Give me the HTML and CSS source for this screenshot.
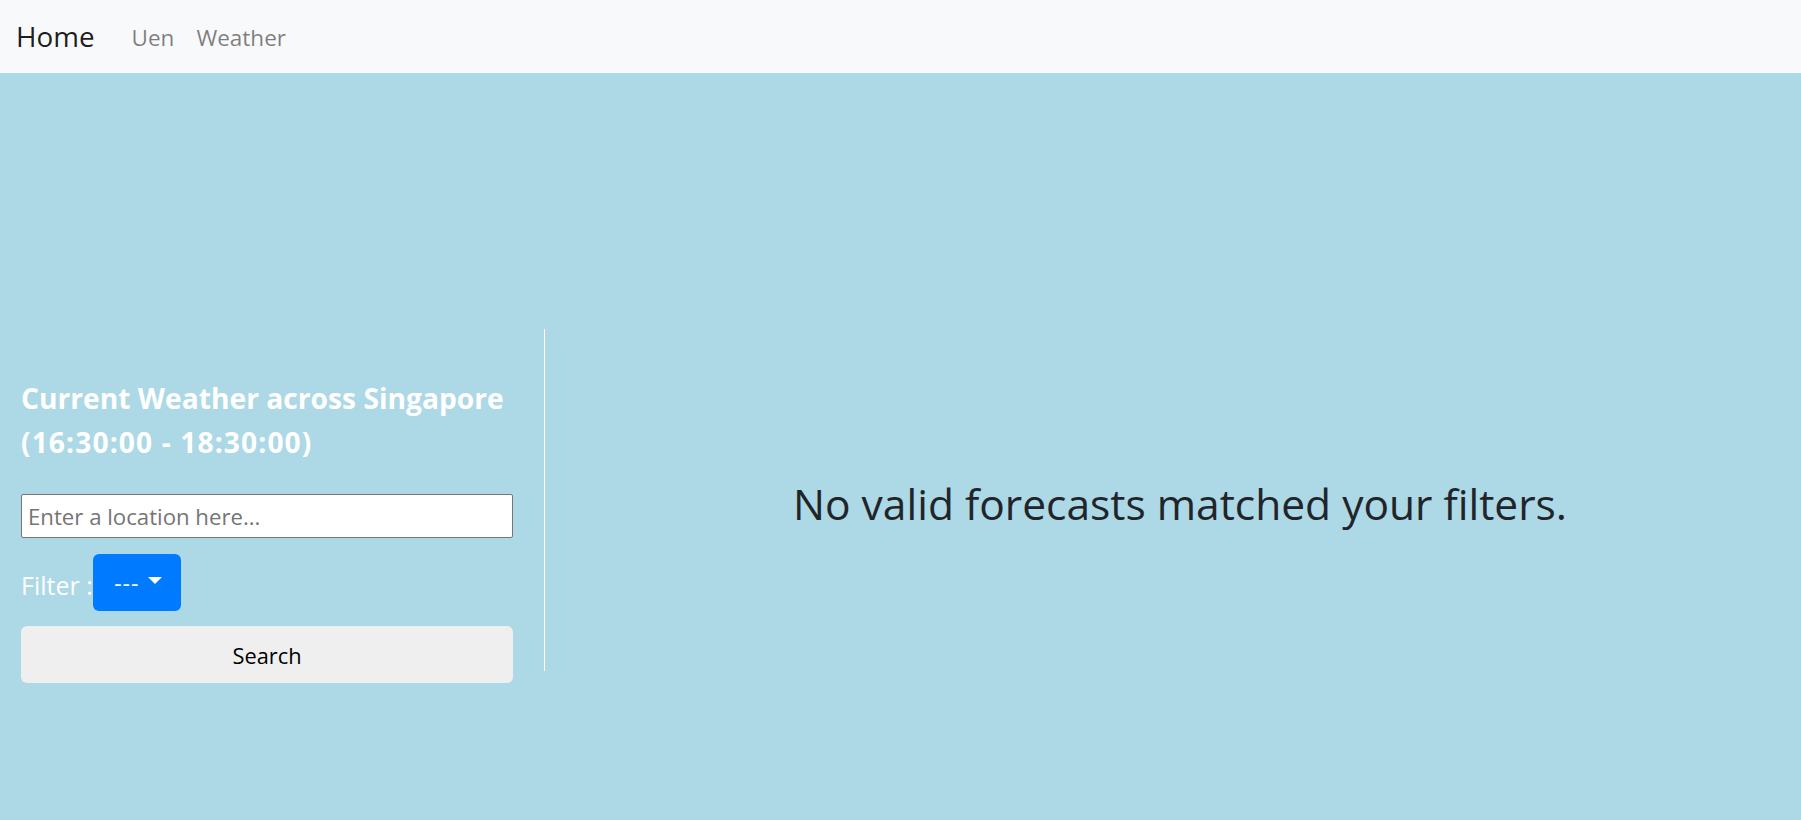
FILE: index.html
```html
<!DOCTYPE html>
<html lang="en">
<head>
<meta charset="utf-8">
<title>Weather</title>
<link rel="stylesheet" href="styles.css">
</head>
<body>
<nav class="navbar">
  <a class="brand" href="#">Home</a>
  <a class="nav-link" href="#">Uen</a>
  <a class="nav-link" href="#">Weather</a>
</nav>
<main class="content">
  <section class="left">
    <h5 class="title">Current Weather across Singapore<br><span class="time">(16:30:00 - 18:30:00)</span></h5>
    <input class="location" type="text" placeholder="Enter a location here...">
    <div class="filter-row">
      <span class="filter-label">Filter :</span>
      <button class="dropdown" type="button"><span class="dash">---</span><span class="caret"></span></button>
    </div>
    <button class="search" type="button">Search</button>
  </section>
  <div class="divider"></div>
  <section class="right">
    <h3 class="empty">No valid forecasts matched your filters.</h3>
  </section>
</main>
</body>
</html>
```
FILE: styles.css
```css
* { box-sizing: border-box; }
html, body { margin: 0; padding: 0; }
body {
  background: #add8e6;
  font-family: "Open Sans", "Noto Sans", sans-serif;
  color: #212529;
  font-size: 23px;
  height: 820px;
  overflow: hidden;
}
.navbar {
  height: 73px;
  background: #f8f9fa;
  display: flex;
  align-items: center;
  padding: 0 16px 2px;
}
.brand {
  font-size: 27.8px;
  color: rgba(0,0,0,.9);
  text-decoration: none;
  margin-right: 26px;
}
.nav-link {
  font-size: 22.5px;
  color: rgba(0,0,0,.5);
  text-decoration: none;
  padding: 4px 11px 0;
}
.content {
  display: flex;
  align-items: flex-start;
  margin-top: 256px;
}
.left {
  width: 492px;
  margin-left: 21px;
  padding-top: 47px;
  flex: none;
}
.title {
  margin: 0;
  color: #fff;
  font-size: 28.2px;
  font-weight: 700;
  line-height: 44px;
}
.time {
  letter-spacing: 1.1px;
}
.location {
  display: block;
  width: 100%;
  height: 44px;
  margin-top: 30px;
  border: 1px solid #767676;
  border-radius: 2px;
  padding: 1px 6px;
  font-family: inherit;
  font-size: 22.2px;
  background: #fff;
}
.location::placeholder { color: #757575; }
.filter-row {
  display: flex;
  align-items: center;
  margin-top: 16px;
}
.filter-label {
  color: #fff;
  font-size: 25px;
  padding-top: 4px;
}
.dropdown {
  width: 88px;
  height: 57px;
  margin-left: 0;
  background: #007bff;
  border: none;
  border-radius: 6px;
  color: #fff;
  font-family: inherit;
  font-size: 23px;
  display: flex;
  align-items: center;
  justify-content: center;
  padding: 0 0 0 3px;
}
.dash {
  letter-spacing: 1px;
}
.caret {
  display: inline-block;
  margin-left: 9px;
  margin-top: -5px;
  border-top: 7px solid #fff;
  border-left: 7px solid transparent;
  border-right: 7px solid transparent;
}
.search {
  display: block;
  width: 100%;
  height: 57px;
  margin-top: 15px;
  background: #efefef;
  border: none;
  border-radius: 6px;
  color: #000;
  font-family: inherit;
  font-size: 21.8px;
  padding-top: 3px;
}
.divider {
  width: 1px;
  height: 342px;
  background: #fff;
  margin-left: 31px;
  flex: none;
}
.right {
  flex: 1;
  height: 342px;
  display: flex;
  align-items: center;
  justify-content: center;
  padding-left: 14px;
}
.empty {
  margin: 0;
  font-weight: 400;
  font-size: 42.5px;
  color: #212529;
  padding-top: 6px;
}
```
